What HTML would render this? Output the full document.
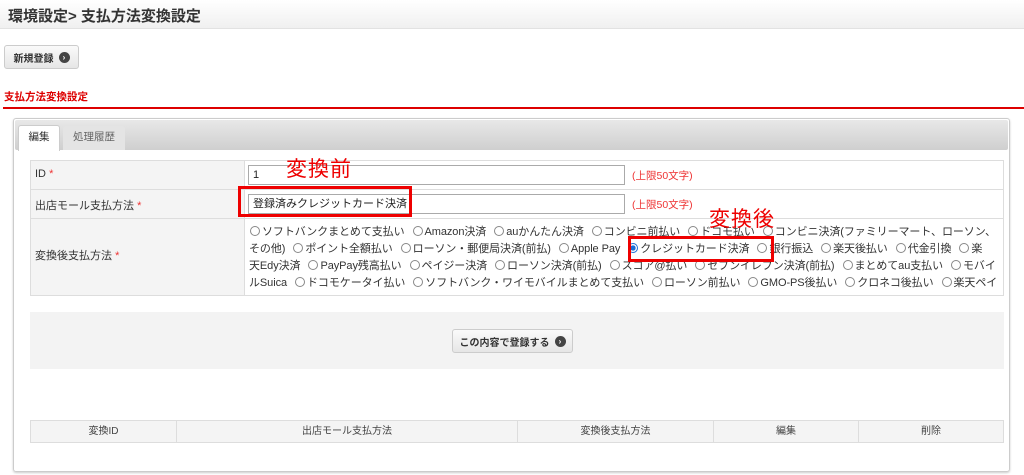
<!DOCTYPE html>
<html><head><meta charset="utf-8"><style>
*{box-sizing:border-box;margin:0;padding:0}
body{width:1024px;height:475px;background:#fff;font-family:"Liberation Sans","Noto Sans CJK JP",sans-serif;color:#333;position:relative;overflow:hidden;font-size:11px}
.a{position:absolute}
.hdr{left:0;top:0;width:1024px;height:29px;background:linear-gradient(#fff,#f0f0f0);border-bottom:1px solid #e2e2e2}
.btn{border:1px solid #ccc;border-radius:3px;background:linear-gradient(#fafafa,#e6e6e6);font-weight:bold;font-size:10px;color:#333;display:flex;align-items:center;justify-content:center;gap:5px}
.ic{width:11px;height:11px;border-radius:50%;background:#444;color:#fff;font-size:8px;line-height:11px;text-align:center;display:inline-block}
.cell{position:absolute;border:1px solid #ddd}
.lbl{background:#f4f4f4}
.inp{position:absolute;border:1px solid #aaa;background:#fff;height:20px;width:377px;padding-left:4px;line-height:18px;font-size:11px;color:#222}
.note{position:absolute;color:#e33;font-size:10.5px}
.req{color:#e33}
.rl{position:absolute;left:249px;white-space:nowrap;font-size:11px;line-height:17px;color:#333;letter-spacing:-0.08px}
.r{display:inline-block;width:10px;height:10px;border:1px solid #888;border-radius:50%;vertical-align:-1px;margin:0 2px 0 5px;background:#fff}
.r.on{border-color:#1a6fd8;background:radial-gradient(#1a6fd8 45%,#fff 50%)}
.th{position:absolute;top:420px;height:23px;border:1px solid #ddd;background:#f4f4f4;text-align:center;line-height:21px;font-size:10px;color:#444}
.box{position:absolute;border:3px solid #e00}
.ann{position:absolute;color:#e00;font-size:21px;letter-spacing:1px}
</style></head><body>
<div class="a hdr"></div>
<div class="a" style="left:8px;top:5px;font-size:15px;font-weight:bold;color:#333">環境設定&gt; 支払方法変換設定</div>
<div class="a btn" style="left:4px;top:45px;width:75px;height:24px">新規登録 <span class="ic">›</span></div>
<div class="a" style="left:4px;top:89px;font-size:10.5px;font-weight:bold;color:#d00">支払方法変換設定</div>
<div class="a" style="left:3px;top:107px;width:1021px;height:2px;background:#d00"></div>
<div class="a" style="left:13px;top:118px;width:997px;height:354px;border:1px solid #ccc;border-radius:3px;box-shadow:0 1px 2px #ccc"></div>
<div class="a" style="left:15px;top:120px;width:993px;height:30px;background:linear-gradient(#e8e8e8,#cfcfcf);border-radius:2px"></div>
<div class="a" style="left:18px;top:125px;width:42px;height:26px;background:#fff;border:1px solid #ccc;border-bottom:none;border-radius:3px 3px 0 0;text-align:center;line-height:22px;font-size:10.5px">編集</div>
<div class="a" style="left:63px;top:126px;width:62px;height:24px;background:#e4e4e4;border-radius:3px 3px 0 0;text-align:center;line-height:22px;font-size:10.5px;color:#666">処理履歴</div>

<div class="cell lbl" style="left:30px;top:160px;width:215px;height:30px;padding:7px 4px">ID <span class="req">*</span></div>
<div class="cell" style="left:244px;top:160px;width:760px;height:30px"></div>
<div class="cell lbl" style="left:30px;top:189px;width:215px;height:30px;padding:7px 4px">出店モール支払方法 <span class="req">*</span></div>
<div class="cell" style="left:244px;top:189px;width:760px;height:30px"></div>
<div class="cell lbl" style="left:30px;top:218px;width:215px;height:78px;padding:28px 4px">変換後支払方法 <span class="req">*</span></div>
<div class="cell" style="left:244px;top:218px;width:760px;height:78px"></div>
<div class="inp" style="left:248px;top:165px">1</div>
<div class="note" style="left:632px;top:168px">(上限50文字)</div>
<div class="inp" style="left:248px;top:194px">登録済みクレジットカード決済</div>
<div class="note" style="left:632px;top:197px">(上限50文字)</div>

<div class="rl" style="top:224px;left:245px"><span class="r"></span>ソフトバンクまとめて支払い <span class="r"></span>Amazon決済 <span class="r"></span>auかんたん決済 <span class="r"></span>コンビニ前払い <span class="r"></span>ドコモ払い <span class="r"></span>コンビニ決済(ファミリーマート、ローソン、</div>
<div class="rl" style="top:241px">その他) <span class="r"></span>ポイント全額払い <span class="r"></span>ローソン・郵便局決済(前払) <span class="r"></span>Apple Pay <span class="r on"></span>クレジットカード決済 <span class="r"></span>銀行振込 <span class="r"></span>楽天後払い <span class="r"></span>代金引換 <span class="r"></span>楽</div>
<div class="rl" style="top:258px">天Edy決済 <span class="r"></span>PayPay残高払い <span class="r"></span>ペイジー決済 <span class="r"></span>ローソン決済(前払) <span class="r"></span>スコア@払い <span class="r"></span>セブンイレブン決済(前払) <span class="r"></span>まとめてau支払い <span class="r"></span>モバイ</div>
<div class="rl" style="top:275px">ルSuica <span class="r"></span>ドコモケータイ払い <span class="r"></span>ソフトバンク・ワイモバイルまとめて支払い <span class="r"></span>ローソン前払い <span class="r"></span>GMO-PS後払い <span class="r"></span>クロネコ後払い <span class="r"></span>楽天ペイ</div>

<div class="box" style="left:238px;top:186px;width:174px;height:31px"></div>
<div class="ann" style="left:286px;top:153px">変換前</div>
<div class="box" style="left:628px;top:236px;width:146px;height:26px"></div>
<div class="ann" style="left:709px;top:203px">変換後</div>

<div class="a" style="left:30px;top:312px;width:974px;height:57px;background:#f3f3f3"></div>
<div class="a btn" style="left:452px;top:329px;width:121px;height:24px">この内容で登録する <span class="ic">›</span></div>

<div class="th" style="left:30px;width:147px">変換ID</div>
<div class="th" style="left:176px;width:342px">出店モール支払方法</div>
<div class="th" style="left:517px;width:197px">変換後支払方法</div>
<div class="th" style="left:713px;width:146px">編集</div>
<div class="th" style="left:858px;width:146px">削除</div>
</body></html>
